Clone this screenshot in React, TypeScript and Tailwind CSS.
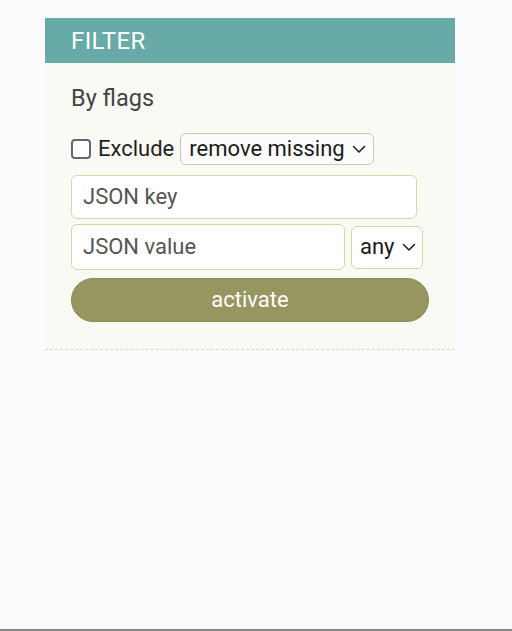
import React from "react";

const Chevron = () => (
  <svg width="14" height="9" viewBox="0 0 14 9" fill="none" className="ml-[7px]">
    <path d="M1.5 1.5 L7 7 L12.5 1.5" stroke="#222" strokeWidth="1.6" strokeLinecap="round" strokeLinejoin="round" />
  </svg>
);

export default function App() {
  return (
    <div
      className="w-[512px] h-[631px] bg-[#fbfbfe] border-b-2 border-[#8a8a80] overflow-hidden"
      style={{ fontFamily: "Roboto, 'Liberation Sans', sans-serif" }}
    >
      <div className="ml-[45px] mt-[18px] w-[410px] bg-[#fafaf5] border-b border-dashed border-[#d8d8c0]">
        <div className="h-[45px] bg-[#68aaa7] flex items-center pl-[26px] text-white text-[24px] leading-none tracking-[0.4px]">
          FILTER
        </div>
        <div className="pl-[26px] pr-[26px] pt-[24px] pb-[27px]">
          <div className="text-[23.5px] leading-none text-[#444444] h-[24px] flex items-center">By flags</div>
          <div className="mt-[22px] flex items-center h-[32px]">
            <div className="w-[20px] h-[20px] border-2 border-[#66666e] rounded-[4px] bg-white" />
            <span className="ml-[7px] text-[22px] text-[#222222] leading-none">Exclude</span>
            <div className="ml-[6px] h-[32px] pl-[8px] pr-[7px] flex items-center border border-[#c8c8c0] rounded-[6px] bg-[#fcfcfc] text-[22px] text-[#1a1a1a] leading-none">
              remove missing
              <Chevron />
            </div>
          </div>
          <div className="mt-[10px] w-[346px] h-[44px] border border-[#d6d6a8] rounded-[6px] bg-white flex items-center pl-[11px] text-[22px] text-[#555555] leading-none">
            JSON key
          </div>
          <div className="mt-[5px] flex items-center">
            <div className="w-[274px] h-[46px] border border-[#d6d6a8] rounded-[6px] bg-white flex items-center pl-[11px] text-[22px] text-[#555555] leading-none">
              JSON value
            </div>
            <div className="ml-[6px] w-[72px] h-[43px] border border-[#d6d6a8] rounded-[6px] bg-white flex items-center pl-[8px] text-[22px] text-[#1a1a1a] leading-none">
              any
              <Chevron />
            </div>
          </div>
          <button className="mt-[8px] w-[358px] h-[44px] rounded-full bg-[#979660] border border-[#8a8a58] text-white text-[22px] leading-none flex items-center justify-center">
            activate
          </button>
        </div>
      </div>
    </div>
  );
}
